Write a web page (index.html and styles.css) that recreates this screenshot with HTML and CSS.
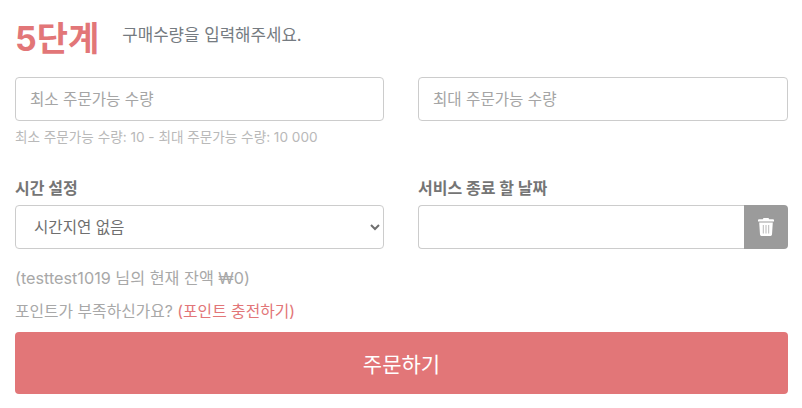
FILE: index.html
```html
<!DOCTYPE html>
<html lang="ko">
<head>
    <meta charset="UTF-8">
    <meta name="viewport" content="width=device-width, initial-scale=1.0">
    <title>5단계</title>
    <link rel="stylesheet" href="styles.css">
</head>
<body>
<div class="order-box">
    <div class="step-head">
        <span class="step-num">5단계</span>
        <span class="step-text">구매수량을 입력해주세요.</span>
    </div>
    <div class="form-row qty-row">
        <div class="field">
            <input class="form-input" type="text" placeholder="최소 주문가능 수량">
            <div class="help">최소 주문가능 수량: 10 - 최대 주문가능 수량: 10 000</div>
        </div>
        <div class="field">
            <input class="form-input" type="text" placeholder="최대 주문가능 수량">
        </div>
    </div>
    <div class="form-row time-row">
        <div class="field">
            <label class="label">시간 설정</label>
            <select class="form-input form-select">
                <option>시간지연 없음</option>
            </select>
        </div>
        <div class="field">
            <label class="label">서비스 종료 할 날짜</label>
            <div class="input-group">
                <input class="form-input" type="text">
                <div class="trash-btn">
                    <svg width="16" height="18" viewBox="0 0 16 18">
                        <path fill="#fff" d="M5.500 0h5l.7 1.200H15a1 1 0 0 1 1 1v1.300H0V2.200a1 1 0 0 1 1-1h3.800z"/>
                        <path fill="#fff" d="M1.200 4.500h13.600l-.8 12.100a1.500 1.500 0 0 1-1.500 1.400H3.500A1.500 1.500 0 0 1 2 16.600z"/>
                        <path stroke="#b9b9b9" stroke-width="1" d="M5.300 7v8.500M8 7v8.500M10.700 7v8.500"/>
                    </svg>
                </div>
            </div>
        </div>
    </div>
    <p class="balance">(testtest1019 님의 현재 잔액 ₩0)</p>
    <p class="points">포인트가 부족하신가요? <a class="charge" href="#">(포인트 충전하기)</a></p>
    <button class="order-btn" type="button">주문하기</button>
</div>
</body>
</html>
```
FILE: styles.css
```css
body {
    margin: 0;
    font-family: Inter, "Noto Sans CJK KR", sans-serif;
    background-color: #fff;
    color: #6f6f6f;
}
.order-box {
    padding: 13px 14px 0 15px;
}
.step-head {
    display: flex;
    align-items: center;
    height: 46px;
}
.step-num {
    font-size: 34px;
    font-weight: 700;
    color: #e27678;
}
.step-text {
    margin-left: 23px;
    margin-top: -4px;
    font-size: 16.800px;
    color: #757b81;
}
.form-row {
    display: grid;
    grid-template-columns: 369px 1fr;
    column-gap: 34px;
}
.qty-row {
    margin-top: 18px;
}
.time-row {
    margin-top: 32px;
}
.form-input {
    box-sizing: border-box;
    display: block;
    width: 100%;
    height: 44px;
    padding: 0 14px;
    font-family: inherit;
    font-size: 15.600px;
    color: #6f6f6f;
    background-color: #fff;
    border: 1px solid #ccc;
    border-radius: 4px;
    outline: none;
}
.form-input::placeholder {
    color: #a5a5a5;
}
.help {
    margin-top: 7px;
    font-size: 13.600px;
    line-height: 18px;
    color: #b9b9b9;
}
.label {
    display: block;
    margin-bottom: 7px;
    font-size: 16px;
    font-weight: 700;
    line-height: 20px;
    color: #757575;
}
.input-group {
    display: flex;
}
.input-group .form-input {
    border-right: none;
    border-radius: 4px 0 0 4px;
}
.trash-btn {
    flex: 0 0 44px;
    display: flex;
    justify-content: center;
    align-items: center;
    height: 44px;
    background-color: #9b9b9b;
    border-radius: 0 4px 4px 0;
}
.balance {
    margin: 19px 0 0;
    font-size: 16.200px;
    line-height: 20px;
    color: #a8a8a8;
}
.points {
    margin: 14px 0 0;
    font-size: 15.800px;
    line-height: 20px;
    color: #a8a8a8;
}
.charge {
    color: #e27678;
    text-decoration: none;
}
.order-btn {
    display: block;
    width: 100%;
    height: 62px;
    margin-top: 10px;
    font-family: inherit;
    font-size: 21px;
    color: #fff;
    background-color: #e27678;
    border: none;
    border-radius: 4px;
}
```
